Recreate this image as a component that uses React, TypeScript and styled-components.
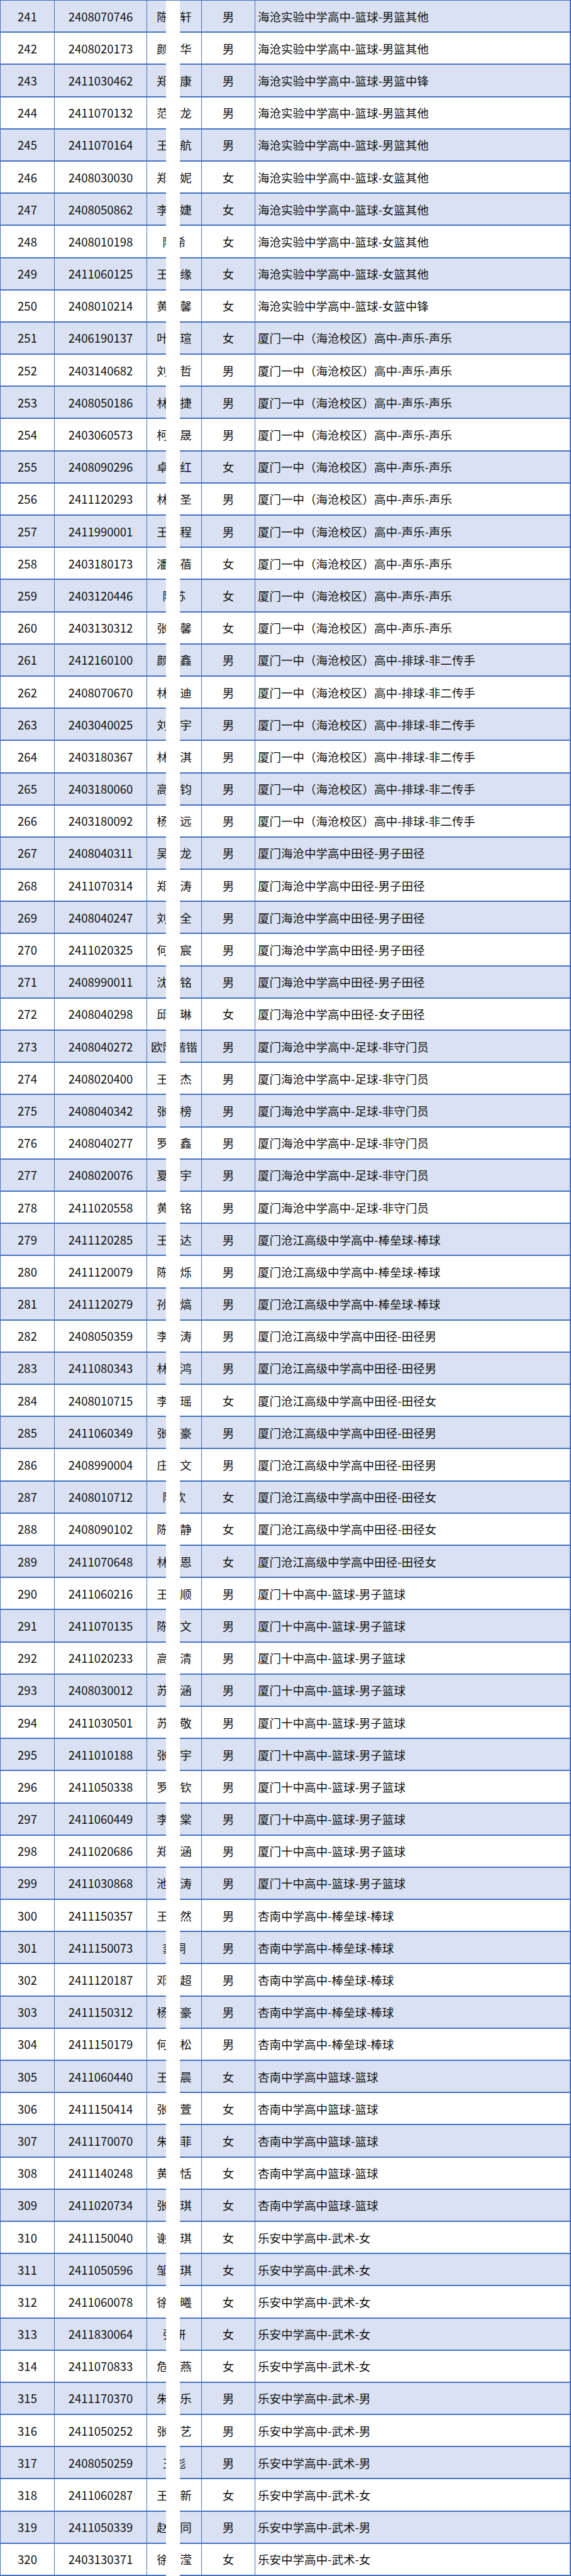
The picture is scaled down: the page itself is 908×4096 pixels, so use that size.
import styled, { createGlobalStyle } from "styled-components";

const GlobalStyle = createGlobalStyle`
  html, body {
    margin: 0;
    padding: 0;
    background: #ffffff;
  }
  body {
    font-family: "Noto Sans CJK SC", "Noto Sans", sans-serif;
  }
`;

const LINE = "#4472c4";

const Sheet = styled.div`
  position: relative;
  width: 908px;
  border-top: 1px solid ${LINE};
  border-left: 1px solid ${LINE};
  border-right: 2px solid ${LINE};
  box-sizing: border-box;
`;

const Row = styled.div<{ $shaded: boolean }>`
  display: grid;
  grid-template-columns: 86px 147px 87px 85px 1fr;
  height: 51.2px;
  box-sizing: border-box;
  border-bottom: 2px solid ${LINE};
  background: ${(p) => (p.$shaded ? "#d9e1f2" : "#ffffff")};
`;

const Cell = styled.div<{ $left?: boolean }>`
  display: flex;
  align-items: center;
  justify-content: ${(p) => (p.$left ? "flex-start" : "center")};
  padding-left: ${(p) => (p.$left ? "4px" : "0")};
  border-right: 1px solid ${LINE};
  font-size: 18.5px;
  color: #111;
  white-space: nowrap;
  overflow: hidden;
  &:last-child {
    border-right: none;
  }
`;

// white band painted over the middle of the name column
const Mask = styled.div`
  position: absolute;
  top: 0;
  bottom: 0;
  left: 263px;
  width: 22px;
  background: #ffffff;
`;

type Student = [string, string, string, string, string];

const A = "海沧实验中学高中-篮球-";
const B = "厦门一中（海沧校区）高中-";
const C = "厦门海沧中学高中";
const D = "厦门沧江高级中学高中";
const E = "厦门十中高中-篮球-男子篮球";
const F = "杏南中学高中";
const G = "乐安中学高中-武术-";

const rows: Student[] = [
  ["241", "2408070746", "陈某轩", "男", A + "男篮其他"],
  ["242", "2408020173", "颜某华", "男", A + "男篮其他"],
  ["243", "2411030462", "郑某康", "男", A + "男篮中锋"],
  ["244", "2411070132", "范某龙", "男", A + "男篮其他"],
  ["245", "2411070164", "王某航", "男", A + "男篮其他"],
  ["246", "2408030030", "郑某妮", "女", A + "女篮其他"],
  ["247", "2408050862", "李某婕", "女", A + "女篮其他"],
  ["248", "2408010198", "陈希", "女", A + "女篮其他"],
  ["249", "2411060125", "王某缘", "女", A + "女篮其他"],
  ["250", "2408010214", "黄某馨", "女", A + "女篮中锋"],
  ["251", "2406190137", "叶某瑄", "女", B + "声乐-声乐"],
  ["252", "2403140682", "刘某哲", "男", B + "声乐-声乐"],
  ["253", "2408050186", "林某捷", "男", B + "声乐-声乐"],
  ["254", "2403060573", "柯某晟", "男", B + "声乐-声乐"],
  ["255", "2408090296", "卓某红", "女", B + "声乐-声乐"],
  ["256", "2411120293", "林某圣", "男", B + "声乐-声乐"],
  ["257", "2411990001", "王某程", "男", B + "声乐-声乐"],
  ["258", "2403180173", "潘某蓓", "女", B + "声乐-声乐"],
  ["259", "2403120446", "陈苏", "女", B + "声乐-声乐"],
  ["260", "2403130312", "张某馨", "女", B + "声乐-声乐"],
  ["261", "2412160100", "颜某鑫", "男", B + "排球-非二传手"],
  ["262", "2408070670", "林某迪", "男", B + "排球-非二传手"],
  ["263", "2403040025", "刘某宇", "男", B + "排球-非二传手"],
  ["264", "2403180367", "林某淇", "男", B + "排球-非二传手"],
  ["265", "2403180060", "高某钧", "男", B + "排球-非二传手"],
  ["266", "2403180092", "杨某远", "男", B + "排球-非二传手"],
  ["267", "2408040311", "吴某龙", "男", C + "田径-男子田径"],
  ["268", "2411070314", "郑某涛", "男", C + "田径-男子田径"],
  ["269", "2408040247", "刘某全", "男", C + "田径-男子田径"],
  ["270", "2411020325", "何某宸", "男", C + "田径-男子田径"],
  ["271", "2408990011", "沈某铭", "男", C + "田径-男子田径"],
  ["272", "2408040298", "邱某琳", "女", C + "田径-女子田径"],
  ["273", "2408040272", "欧阳楷锴", "男", C + "-足球-非守门员"],
  ["274", "2408020400", "王某杰", "男", C + "-足球-非守门员"],
  ["275", "2408040342", "张某榜", "男", C + "-足球-非守门员"],
  ["276", "2408040277", "罗某鑫", "男", C + "-足球-非守门员"],
  ["277", "2408020076", "夏某宇", "男", C + "-足球-非守门员"],
  ["278", "2411020558", "黄某铭", "男", C + "-足球-非守门员"],
  ["279", "2411120285", "王某达", "男", D + "-棒垒球-棒球"],
  ["280", "2411120079", "陈某烁", "男", D + "-棒垒球-棒球"],
  ["281", "2411120279", "孙某熇", "男", D + "-棒垒球-棒球"],
  ["282", "2408050359", "李某涛", "男", D + "田径-田径男"],
  ["283", "2411080343", "林某鸿", "男", D + "田径-田径男"],
  ["284", "2408010715", "李某瑶", "女", D + "田径-田径女"],
  ["285", "2411060349", "张某豪", "男", D + "田径-田径男"],
  ["286", "2408990004", "庄某文", "男", D + "田径-田径男"],
  ["287", "2408010712", "陈欢", "女", D + "田径-田径女"],
  ["288", "2408090102", "陈某静", "女", D + "田径-田径女"],
  ["289", "2411070648", "林某恩", "女", D + "田径-田径女"],
  ["290", "2411060216", "王某顺", "男", E],
  ["291", "2411070135", "陈某文", "男", E],
  ["292", "2411020233", "高某清", "男", E],
  ["293", "2408030012", "苏某涵", "男", E],
  ["294", "2411030501", "苏某敬", "男", E],
  ["295", "2411010188", "张某宇", "男", E],
  ["296", "2411050338", "罗某钦", "男", E],
  ["297", "2411060449", "李某棠", "男", E],
  ["298", "2411020686", "郑某涵", "男", E],
  ["299", "2411030868", "池某涛", "男", E],
  ["300", "2411150357", "王某然", "男", F + "-棒垒球-棒球"],
  ["301", "2411150073", "龚桐", "男", F + "-棒垒球-棒球"],
  ["302", "2411120187", "邓某超", "男", F + "-棒垒球-棒球"],
  ["303", "2411150312", "杨某豪", "男", F + "-棒垒球-棒球"],
  ["304", "2411150179", "何某松", "男", F + "-棒垒球-棒球"],
  ["305", "2411060440", "王某晨", "女", F + "篮球-篮球"],
  ["306", "2411150414", "张某萱", "女", F + "篮球-篮球"],
  ["307", "2411170070", "朱某菲", "女", F + "篮球-篮球"],
  ["308", "2411140248", "黄某恬", "女", F + "篮球-篮球"],
  ["309", "2411020734", "张某琪", "女", F + "篮球-篮球"],
  ["310", "2411150040", "谢某琪", "女", G + "女"],
  ["311", "2411050596", "邹某琪", "女", G + "女"],
  ["312", "2411060078", "徐某曦", "女", G + "女"],
  ["313", "2411830064", "张妍", "女", G + "女"],
  ["314", "2411070833", "危某燕", "女", G + "女"],
  ["315", "2411170370", "朱某乐", "男", G + "男"],
  ["316", "2411050252", "张某艺", "男", G + "男"],
  ["317", "2408050259", "王彪", "男", G + "男"],
  ["318", "2411060287", "王某新", "女", G + "女"],
  ["319", "2411050339", "赵某同", "男", G + "男"],
  ["320", "2403130371", "徐某滢", "女", G + "女"],
];

export default function App() {
  return (
    <>
      <GlobalStyle />
      <Sheet>
        {rows.map(([no, id, name, sex, item], i) => (
          <Row key={no} $shaded={i % 2 === 0}>
            <Cell>{no}</Cell>
            <Cell>{id}</Cell>
            <Cell>{name}</Cell>
            <Cell>{sex}</Cell>
            <Cell $left>{item}</Cell>
          </Row>
        ))}
        <Mask />
      </Sheet>
    </>
  );
}
